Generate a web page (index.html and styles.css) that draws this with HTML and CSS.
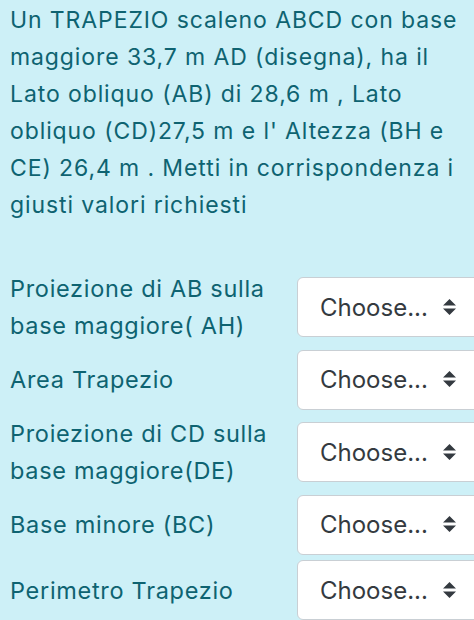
FILE: index.html
```html
<!DOCTYPE html>
<html lang="it">
<head>
<meta charset="utf-8">
<link rel="stylesheet" href="styles.css">
</head>
<body>
<div class="page">
  <p class="question">Un TRAPEZIO scaleno ABCD con base maggiore 33,7 m AD (disegna), ha il Lato obliquo (AB) di 28,6 m , Lato obliquo (CD)27,5 m e l' Altezza (BH e CE) 26,4 m . Metti in corrispondenza i giusti valori richiesti</p>
  <div class="rows">
    <div class="row">
      <div class="label">Proiezione di AB sulla base maggiore( AH)</div>
      <div class="select"><span>Choose...</span><svg class="arrows" width="13" height="17" viewBox="0 0 13 17"><path d="M6.5 0 L13 6.5 L0 6.5 Z M0 9.5 L13 9.5 L6.5 16 Z" fill="#343a40"/></svg></div>
    </div>
    <div class="row">
      <div class="label">Area Trapezio</div>
      <div class="select"><span>Choose...</span><svg class="arrows" width="13" height="17" viewBox="0 0 13 17"><path d="M6.5 0 L13 6.5 L0 6.5 Z M0 9.5 L13 9.5 L6.5 16 Z" fill="#343a40"/></svg></div>
    </div>
    <div class="row">
      <div class="label">Proiezione di CD sulla base maggiore(DE)</div>
      <div class="select"><span>Choose...</span><svg class="arrows" width="13" height="17" viewBox="0 0 13 17"><path d="M6.5 0 L13 6.5 L0 6.5 Z M0 9.5 L13 9.5 L6.5 16 Z" fill="#343a40"/></svg></div>
    </div>
    <div class="row">
      <div class="label">Base minore (BC)</div>
      <div class="select"><span>Choose...</span><svg class="arrows" width="13" height="17" viewBox="0 0 13 17"><path d="M6.5 0 L13 6.5 L0 6.5 Z M0 9.5 L13 9.5 L6.5 16 Z" fill="#343a40"/></svg></div>
    </div>
    <div class="row">
      <div class="label">Perimetro Trapezio</div>
      <div class="select"><span>Choose...</span><svg class="arrows" width="13" height="17" viewBox="0 0 13 17"><path d="M6.5 0 L13 6.5 L0 6.5 Z M0 9.5 L13 9.5 L6.5 16 Z" fill="#343a40"/></svg></div>
    </div>
  </div>
</div>
</body>
</html>
```
FILE: styles.css
```css
html, body {
  margin: 0;
  padding: 0;
  background: #cdf0f7;
  overflow: hidden;
}
.page {
  width: 474px;
  height: 620px;
  padding: 2px 0 0 10px;
  box-sizing: border-box;
  font-family: Inter, "Liberation Sans", sans-serif;
  color: #0e6371;
}
.question {
  margin: 0 0 46px 0;
  font-size: 23px;
  letter-spacing: 0.9px;
  line-height: 37px;
  width: 462px;
}
.rows {
  display: flex;
  flex-direction: column;
  gap: 5.5px;
}
.row {
  display: flex;
  align-items: center;
}
.label {
  width: 287px;
  flex: none;
  font-size: 23.5px;
  letter-spacing: 0.7px;
  line-height: 37px;
}
.select {
  flex: none;
  width: 200px;
  height: 60px;
  box-sizing: border-box;
  background: #ffffff;
  border: 1px solid #c9cfd4;
  border-radius: 6px;
  display: flex;
  align-items: center;
  padding-left: 22px;
  color: #343a40;
  font-size: 24px;
}
.arrows {
  margin-left: 15px;
  flex: none;
}
```
